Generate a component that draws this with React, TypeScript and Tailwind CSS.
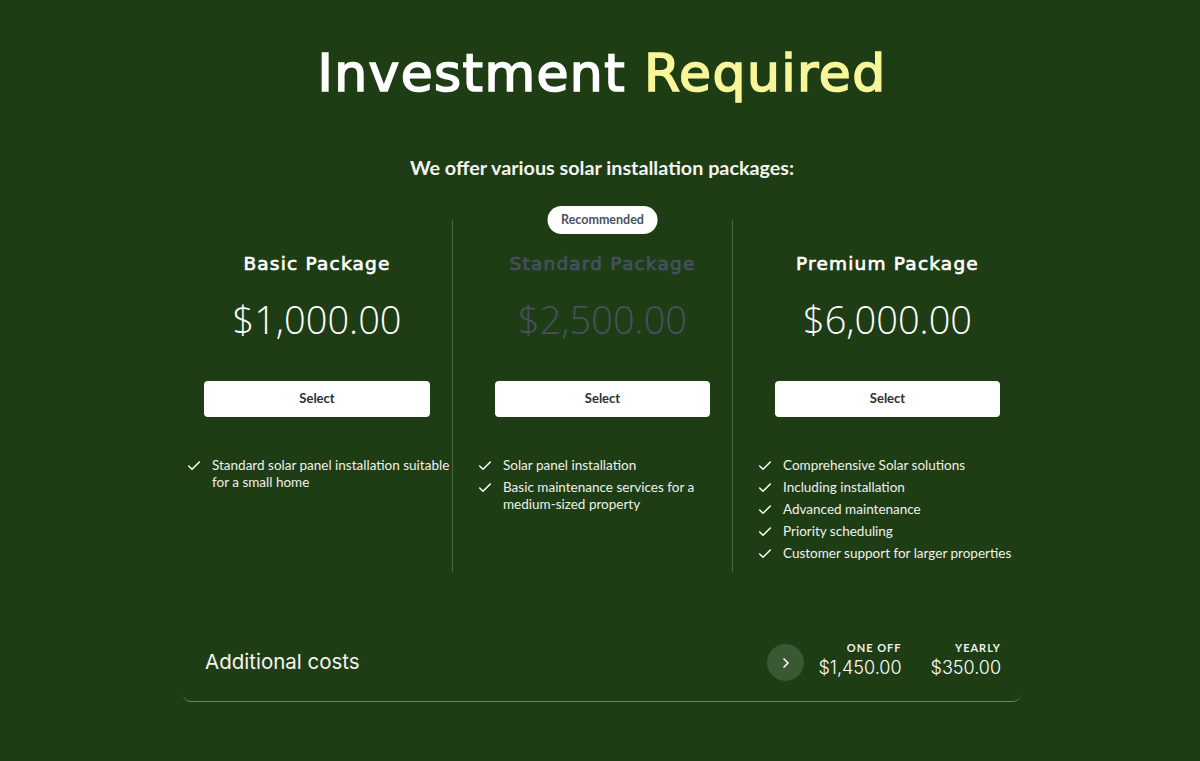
import { Check, ChevronRight } from 'lucide-react';

interface Pkg {
  name: string;
  price: string;
  features: string[];
  recommended?: boolean;
}

const packages: Pkg[] = [
  {
    name: 'Basic Package',
    price: '$1,000.00',
    features: ['Standard solar panel installation suitable for a small home'],
  },
  {
    name: 'Standard Package',
    price: '$2,500.00',
    recommended: true,
    features: ['Solar panel installation', 'Basic maintenance services for a medium-sized property'],
  },
  {
    name: 'Premium Package',
    price: '$6,000.00',
    features: [
      'Comprehensive Solar solutions',
      'Including installation',
      'Advanced maintenance',
      'Priority scheduling',
      'Customer support for larger properties',
    ],
  },
];

const display = "font-['DejaVu_Sans',sans-serif] font-normal";
const body = "font-['Lato',sans-serif]";

function PackageColumn({ pkg, index }: { pkg: Pkg; index: number }) {
  const widths = ['w-[270px]', 'w-[280px] pl-5 border-l', 'w-[290px] pl-5 border-l'];
  return (
    <div className={`relative flex flex-col border-[#4a6743] ${widths[index]}`}>
      {pkg.recommended && (
        <div className="absolute left-1/2 top-[-14px] ml-[10px] -translate-x-1/2 rounded-full bg-white px-[14px] py-[6px] text-[12.5px] font-bold leading-4 text-[#4b5260]">
          Recommended
        </div>
      )}
      <div className="flex flex-col items-center pt-[32px]">
        <h3
          className={`${display} text-[18.5px] leading-[24px] tracking-[1.2px] [-webkit-text-stroke:0.65px_currentColor] ${
            pkg.recommended ? 'text-[#465060]' : 'text-white'
          }`}
        >
          {pkg.name}
        </h3>
        <div
          className={`mt-[19px] font-['Open_Sans',sans-serif] text-[38px] font-light leading-[48px] ${
            pkg.recommended ? 'text-[#465060]' : 'text-white'
          }`}
        >
          {pkg.price}
        </div>
      </div>
      <div className="mt-[38px] px-[22px]">
        <button className="h-[36px] w-full rounded-[4px] bg-white text-[13px] font-bold text-[#2a2f3a]">
          Select
        </button>
      </div>
      <ul className="mt-[40px] flex flex-col gap-[5px] pb-[10px] pl-[4px]">
        {pkg.features.map((f) => (
          <li key={f} className="flex items-start gap-[10px] text-[13.5px] leading-[17px] text-[#eef1ea]">
            <Check className="mt-[1px] h-4 w-4 shrink-0 text-white" strokeWidth={2.2} />
            <span>{f}</span>
          </li>
        ))}
      </ul>
    </div>
  );
}

export default function App() {
  return (
    <div className={`min-h-[761px] w-full bg-[#1f3d15] pl-[4px] ${body}`}>
      <div className="mx-auto flex w-[840px] flex-col items-center">
        <h1
          className={`${display} mt-[40px] text-[52px] leading-[66px] tracking-[1.4px] text-white [-webkit-text-stroke:1.7px_currentColor]`}
        >
          Investment <span className="text-[#f9f69a]">Required</span>
        </h1>
        <p className="mt-[49px] text-[19.75px] font-bold leading-[26px] text-[#f3f4f0]">
          We offer various solar installation packages:
        </p>
        <div className="mt-[39px] flex w-full">
          {packages.map((p, i) => (
            <PackageColumn key={p.name} pkg={p} index={i} />
          ))}
        </div>
        <div className="mt-[52px] flex h-[78px] w-[838px] items-center justify-between rounded-b-[8px] border-b border-[#6d8465] pl-[22px] pr-[20px]">
          <span className="font-['Inter',sans-serif] text-[20.5px] font-normal text-[#f3f4f0]">Additional costs</span>
          <div className="flex items-center">
            <button className="mr-[14px] flex h-[37px] w-[37px] items-center justify-center rounded-full bg-[#3a5833] text-white">
              <ChevronRight className="h-4 w-4" strokeWidth={2.5} />
            </button>
            <div className="mb-[4px] flex flex-col items-end">
              <span className="text-[11px] font-bold leading-[14px] tracking-[1px] text-[#eef1ea]">ONE OFF</span>
              <span className="mt-[1px] font-['Inter',sans-serif] text-[18px] font-light leading-[24px] text-white">$1,450.00</span>
            </div>
            <div className="mb-[4px] ml-[29px] flex flex-col items-end">
              <span className="text-[11px] font-bold leading-[14px] tracking-[1px] text-[#eef1ea]">YEARLY</span>
              <span className="mt-[1px] font-['Inter',sans-serif] text-[18px] font-light leading-[24px] text-white">$350.00</span>
            </div>
          </div>
        </div>
      </div>
    </div>
  );
}
